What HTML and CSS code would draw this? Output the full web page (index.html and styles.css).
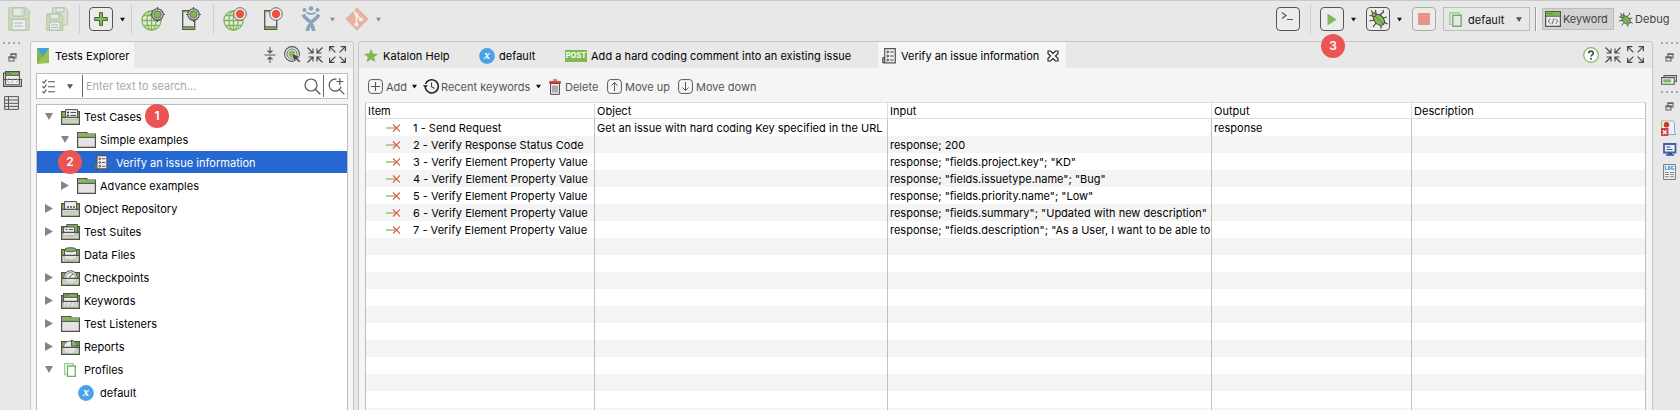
FILE: index.html
```
<!DOCTYPE html>
<html lang="en">
<head>
<meta charset="utf-8">
<title>Katalon Studio</title>
<link rel="stylesheet" href="styles.css">
</head>
<body>
<svg class="defs" width="0" height="0">
  <symbol id="caret" viewBox="0 0 6 5"><path d="M0 .3h6L3 5z" fill="currentColor"/></symbol>
  <symbol id="globe" viewBox="0 0 24 24"><g fill="none" stroke="#7fb855" stroke-width="1.3"><circle cx="10.5" cy="13.5" r="9.6"/><ellipse cx="10.5" cy="13.5" rx="4.6" ry="9.6"/><path d="M10.500 4v19M1 13.500h19M2.500 8.500h16M2.500 18.500h16"/></g></symbol>
  <symbol id="phone" viewBox="0 0 20 24"><path d="M1.700 3.700h12v18.600h-12z" fill="#e8e8e8" stroke="#555" stroke-width="1.300"/><path d="M2 20h11.500v2H2zM2 4h6v1.500H2z" fill="#7fb855"/><path d="M1.500 19.800h12" stroke="#555"/></symbol>
  <symbol id="spy" viewBox="0 0 14 14"><circle cx="7" cy="7" r="5.300" fill="#e8e8e8" stroke="#555" stroke-width="1.100"/><circle cx="7" cy="7" r="3.500" fill="#7fb855" stroke="#555" stroke-width=".7"/><path d="M7 0v2M7 12v2M0 7h2M12 7h2" stroke="#555" stroke-width="1.100"/></symbol>
  <symbol id="rec" viewBox="0 0 14 14"><circle cx="7" cy="7" r="6.300" fill="#f0f0f0" stroke="#666" stroke-width="1"/><circle cx="7" cy="7" r="4.200" fill="#ee523f"/></symbol>
  <symbol id="bug" viewBox="0 0 20 20"><g stroke="#444" stroke-width="1.200" fill="none"><path d="M8 5 7.500 1M5 7 1.500 6.500M12 6l3.500-3-.3-2M15 9l4-1M16 13l3.500 2M6 11l-4.500 1M8 14l-3 4M13 17v2.500M3 1.500 5 4"/></g><ellipse cx="11" cy="10.800" rx="6.400" ry="4.500" transform="rotate(45 11 10.800)" fill="#7fb855" stroke="#444" stroke-width="1"/><circle cx="6" cy="5.800" r="2.100" fill="#7fb855" stroke="#444"/><path d="m7 7 8 8" stroke="#5a7d42" stroke-width=".8"/></symbol>
  <symbol id="shrink" viewBox="0 0 16 16"><path d="M.5.5 6 6M6 1.500V6H1.500M15.500.5 10 6M10 1.500V6h4.500M.5 15.500 6 10M1.500 10H6v4.500M15.500 15.500 10 10M14.500 10H10v4.500" fill="none" stroke="#444" stroke-width="1.100"/></symbol>
  <symbol id="grow" viewBox="0 0 16 16"><path d="M.6.6 6 6M.6 5V.6H5M15.400.6 10 6M11 .6h4.400V5M.6 15.400 6 10M.6 11v4.400H5M15.400 15.400 10 10M15.400 11v4.400H11" fill="none" stroke="#444" stroke-width="1.100"/></symbol>
  <symbol id="restore" viewBox="0 0 9 9"><path d="M3 1h5v4H3zM1 4h5v4H1z" fill="#e8e8e8" stroke="#6b635c" stroke-width="1.100"/><path d="M2.500 1.200h6M.5 4.200h6" stroke="#6b635c" stroke-width="1.600"/></symbol>
  <symbol id="var" viewBox="0 0 16 16"><circle cx="8" cy="8" r="7.900" fill="#4aa3e8"/><text x="7.900" y="11.300" class="var-x">x</text></symbol>
  <symbol id="case" viewBox="0 0 14 16"><path d="M.7 9.500H3v5.300H.7z" fill="#7fb855" stroke="#555"/><path d="M2.700.7h10.600v14.100H2.700z" fill="#efefef" stroke="#555" stroke-width="1.200"/><path d="M8 4h3.700M8 8h3.700M8 12h3.700" stroke="#555"/><g fill="none" stroke="#444" stroke-width="1"><circle cx="5.700" cy="4" r=".9"/><circle cx="5.700" cy="8" r=".9"/><circle cx="5.700" cy="12" r=".9"/></g></symbol>
  <symbol id="folder" viewBox="0 0 19 16"><path d="M.6 15.300V.7h9.200V2h8.600v13.300z" fill="#e4e2e4" stroke="#505050" stroke-width="1.200"/><path d="M1.200 1.300h8v1.300h8.600v2.600H1.200z" fill="#7fb855"/><path d="M.6 5.400h17.800" stroke="#505050"/></symbol>
  <symbol id="bin-back" viewBox="0 0 19 16"><path d="M.6 15.300V2.600h17.800v12.700z" fill="#7fb855" stroke="#505050" stroke-width="1.200"/></symbol>
  <symbol id="bin-front" viewBox="0 0 19 16"><path d="M1 8.500h17v6.500H1z" fill="#dfe3da" fill-opacity=".75"/><path d="M.6 8.300h17.800v7H.6z" fill="none" stroke="#505050" stroke-width="1.200"/></symbol>
  <symbol id="step" viewBox="0 0 14 8"><path d="M0 4h10" stroke="#7fb855" stroke-width="1.200"/><path d="m7 .5 7 7M14 .5l-7 7" stroke="#e05a4a" stroke-width="1.100"/></symbol>
  <symbol id="pages" viewBox="0 0 12 14"><path d="M2.500 11.500H.7V.7h8.500v1.500" fill="none" stroke="#9fca9b" stroke-width="1.300"/><path d="M3.500 3h7.800v10.300H3.500z" fill="none" stroke="#6fb268" stroke-width="1.300"/></symbol>
  <symbol id="code" viewBox="0 0 19 16"><path d="M2.600.6h13.800v6H2.600z" fill="#7fb855" stroke="#505050" stroke-width="1.200"/><path d="M4.500 2.300h4" stroke="#3f6e25" stroke-dasharray="1 1"/><path d="M2.600 4.300h13.800v9.500H2.600z" fill="#efefef" stroke="#505050"/></symbol>
</svg>

<header class="toolbar">
  <svg class="save" width="22" height="24" viewBox="0 0 22 24"><path d="M.7.7h17.600l3 3v19.600H.7z" fill="#c7dcba" stroke="#b8cdad"/><path d="M5 1h11v8H5z" fill="#e8e8e8" stroke="#b5bcb0"/><path d="M12.500 2.500h2v4h-2z" fill="#c7dcba"/><path d="M4 12.500h14V23H4z" fill="#eee" stroke="#b5bcb0"/><path d="M6 16h9M6 19h9" stroke="#b5b5b5"/></svg>
  <svg class="save-all" width="23" height="24" viewBox="0 0 23 24"><path d="M6.600 6V.7h12.600l2.500 2.500V18H17" fill="#d5e2cc" stroke="#b9c7b0"/><path d="M10 1h8v4h-8z" fill="#e8e8e8" stroke="#bbb"/><path d="M.7 6.700h13.600l2.500 2.500v14.200H.7z" fill="#c7dcba" stroke="#b4c8a8"/><path d="M4 7h9v5H4z" fill="#e8e8e8" stroke="#b5bcb0"/><path d="M3.500 15h10.500v8H3.500z" fill="#eee" stroke="#b5bcb0"/><path d="M5 18h7M5 20.500h7" stroke="#b5b5b5"/></svg>
  <i class="sep s1"></i>
  <span class="box b-add"><svg width="14" height="14" viewBox="0 0 14 14"><path d="M5.500.6h3v4.900h4.900v3H8.500v4.900h-3V8.500H.6v-3h4.900z" fill="#83bd57" stroke="#41582f" stroke-width=".9"/></svg></span>
  <svg class="caret"><use href="#caret"/></svg>
  <i class="sep s2"></i>
  <svg class="g1" width="24" height="24" viewBox="0 0 24 24"><use href="#globe" width="24" height="24"/><use href="#spy" x="9" y="0" width="15" height="15"/></svg>
  <svg class="p1" width="20" height="24" viewBox="0 0 20 24"><use href="#phone" width="20" height="24"/><use href="#spy" x="5" y="0" width="15" height="15"/></svg>
  <i class="sep s3"></i>
  <svg class="g1" width="24" height="24" viewBox="0 0 24 24"><use href="#globe" width="24" height="24"/><use href="#rec" x="10" y="0" width="14" height="14"/></svg>
  <svg class="p1" width="20" height="24" viewBox="0 0 20 24"><use href="#phone" width="20" height="24"/><use href="#rec" x="6" y="0" width="14" height="14"/></svg>
  <svg class="jira" width="20" height="26" viewBox="0 0 20 26"><g fill="#8ba3bd"><circle cx="3.500" cy="4" r="2"/><circle cx="10" cy="2.500" r="2.300"/><circle cx="16.500" cy="4" r="2"/></g><path d="M2.200 8.500c2 5 5 4.500 7.800 8.500 2 3 2.500 5 2.600 8M17.800 8.500c-2 5-5 4.500-7.800 8.500-2 3-3.500 5-3.600 8" stroke="#8ba3bd" stroke-width="3.600" fill="none"/><path d="M5.500 6.500q4.500 3 9 0" fill="none" stroke="#8ba3bd" stroke-width="2"/></svg>
  <svg class="caret dim"><use href="#caret"/></svg>
  <svg class="git" width="24" height="24" viewBox="0 0 24 24"><path d="m12 .8 11.200 11.200L12 23.200.8 12z" fill="#e5b3a4" stroke="#e5b3a4" stroke-linejoin="round"/><path d="m8.500 4 3 3.500v10M11.500 8l4.500 4.500" stroke="#f5eeea" stroke-width="1.600" fill="none"/><g fill="#f5eeea"><circle cx="11.500" cy="7.800" r="2"/><circle cx="16" cy="12.500" r="2"/><circle cx="11.500" cy="17.500" r="2"/></g></svg>
  <svg class="caret dim last"><use href="#caret"/></svg>

  <div class="tools-right">
    <span class="box b-console"><svg width="14" height="14" viewBox="0 0 14 14"><path d="m1 .5 4 3-4 3M6 7.500h6" fill="none" stroke="#555" stroke-width="1.200"/></svg></span>
    <i class="sep s4"></i>
    <span class="box b-run"><svg width="10" height="13" viewBox="0 0 10 13"><path d="M.5.5 9.500 6.500l-9 6z" fill="#7fb855"/></svg><b class="badge n3">3</b></span>
    <svg class="caret"><use href="#caret"/></svg>
    <span class="box b-bug"><svg width="20" height="20"><use href="#bug"/></svg></span>
    <svg class="caret"><use href="#caret"/></svg>
    <span class="box b-stop"><i></i></span>
    <span class="combo"><svg width="13" height="15"><use href="#pages"/></svg><em>default</em><svg class="caret gray"><use href="#caret"/></svg></span>
    <i class="divider"></i>
    <span class="persp on"><svg width="16" height="16" viewBox="0 0 16 16"><path d="M.6.6h14.800v14.800H.6z" fill="#ececec" stroke="#555" stroke-width="1.200"/><path d="M1 1h14v4H1z" fill="#7fb855"/><path d="M2.500 2.600h5" stroke="#3e6728" stroke-dasharray="1 1"/><path d="M.6 5.300h14.800M5.500 8 3 10.300l2.500 2.300M10.500 8l2.500 2.300-2.500 2.300M9 7.500l-2 5.700" fill="none" stroke="#555" stroke-width=".9"/></svg>Keyword</span>
    <span class="persp"><svg width="15" height="15"><use href="#bug"/></svg>Debug</span>
  </div>
</header>

<main class="work">
  <aside class="trim left">
    <i class="grip"></i>
    <svg class="restore"><use href="#restore"/></svg>
    <svg class="t-key" width="19" height="16"><use href="#code"/><path d="M.6 8.500h17.800v6.900H.6zM2.500 2H.6v7" fill="none" stroke="#505050" stroke-width="1.200"/><path d="m6 7-2 2.500L6 12M13 7l2 2.500-2 2.500M10.500 7l-2 5" fill="none" stroke="#aaa" stroke-width=".9"/></svg>
    <svg class="t-list" width="15" height="14" viewBox="0 0 15 14"><path d="M.6.6h13.800v12.800H.6zM4.500.6v12.800M.6 4h13.800M.6 7.300h13.800M.6 10.400h13.800" fill="none" stroke="#555"/></svg>
  </aside>

  <section class="panel explorer">
    <div class="tabs">
      <span class="tab active t-exp"><svg width="12" height="16" viewBox="0 0 12 16"><path d="M0 0v16l12-1V0z" fill="#97c352"/><path d="M0 0h12L6 9z" fill="#429fd9"/><path d="m0 0 6 8-6 8z" fill="#84b648"/></svg>Tests Explorer</span>
      <span class="tab-tools">
        <svg width="12" height="16" viewBox="0 0 12 16"><path d="M.5 8h11M6 0v5.500M3.500 3.500 6 6l2.500-2.500M6 16v-5.500M3.500 12.500 6 10l2.500 2.500" fill="none" stroke="#555" stroke-width="1.100"/></svg>
        <svg width="17" height="17" viewBox="0 0 17 17"><circle cx="8" cy="8" r="7.400" fill="none" stroke="#555" stroke-width="1.100"/><circle cx="8" cy="8" r="5" fill="none" stroke="#777"/><circle cx="8" cy="8" r="3.400" fill="#7fb855"/><path d="m7.500 7.500 8.500 3.200-2.800 1.200 3.300 3.300-1.300 1.300-3.300-3.300-1.300 2.800z" fill="#444" stroke="#e8e8e8" stroke-width=".5"/></svg>
        <svg width="16" height="16"><use href="#shrink"/></svg>
        <svg width="17" height="17"><use href="#grow"/></svg>
      </span>
    </div>
    <div class="search">
      <svg class="chk" width="14" height="15" viewBox="0 0 14 15"><path d="m.5 2.500 1.500 1.500L4.500.7M.5 7.500 2 9l2.500-3.300M.5 12.500 2 14l2.500-3.300M6 2.800h7M6 7.800h7M6 12.800h7" fill="none" stroke="#555" stroke-width="1.100"/></svg>
      <svg class="caret gray"><use href="#caret"/></svg>
      <i class="bar"></i>
      <span class="ph">Enter text to search...</span>
      <svg class="mag" width="17" height="17" viewBox="0 0 17 17"><circle cx="7" cy="7" r="6" fill="none" stroke="#555" stroke-width="1.200"/><path d="m11.300 11.300 5 5" stroke="#555" stroke-width="1.300"/></svg>
      <i class="bar"></i>
      <svg class="mag2" width="17" height="17" viewBox="0 0 17 17"><path d="M8.500 1.200A6 6 0 1 0 13 8.500" fill="none" stroke="#555" stroke-width="1.200"/><path d="m11.300 11.300 5 5M11.800 0v7M8.300 3.500h7" stroke="#555" stroke-width="1.200"/></svg>
    </div>
    <ul class="tree">
      <li><i class="tw open"></i><svg class="ic"><use href="#bin-back"/><path d="M4.600.6h12v10h-12z" fill="#efefef" stroke="#505050"/><path d="M9.500 3.500H15M9.500 6.500H15" stroke="#555"/><path d="M6 3.500h2M6 6.500h2" stroke="#333" stroke-width="1.500"/><use href="#bin-front"/></svg>Test Cases<b class="badge n1">1</b></li>
      <li class="d1"><i class="tw open"></i><svg class="ic"><use href="#folder"/></svg>Simple examples</li>
      <li class="d2 sel"><b class="badge n2">2</b><svg class="ic-case"><use href="#case"/></svg>Verify an issue information</li>
      <li class="d1"><i class="tw"></i><svg class="ic"><use href="#folder"/></svg>Advance examples</li>
      <li><i class="tw"></i><svg class="ic"><use href="#bin-back"/><path d="M3.600.6h12v10h-12z" fill="#efefef" stroke="#505050"/><path d="M6 6h8" stroke="#555" stroke-width="1.500" stroke-dasharray="2 1"/><use href="#bin-front"/></svg>Object Repository</li>
      <li><i class="tw"></i><svg class="ic"><use href="#bin-back"/><path d="M5.600.6h11v10h-11z" fill="#7fb855" stroke="#505050"/><path d="M2.600 3h11v9h-11z" fill="#efefef" stroke="#505050"/><path d="M8 5.500h4M4.500 5.500h2" stroke="#555"/><use href="#bin-front"/><path d="M8 11.500h4M4.500 11.500h2" stroke="#aaa"/></svg>Test Suites</li>
      <li><i class="tw none"></i><svg class="ic"><use href="#bin-back"/><path d="M3.600 2.500v11h12v-11" fill="#efefef" stroke="#505050"/><ellipse cx="9.500" cy="2.700" rx="6" ry="2" fill="#7fb855" stroke="#505050"/><use href="#bin-front"/><path d="M4 12q5.500 2 11 0" fill="none" stroke="#bbb"/></svg>Data Files</li>
      <li><i class="tw"></i><svg class="ic"><use href="#bin-back"/><circle cx="9.500" cy="7.500" r="6.800" fill="#dce8d2" stroke="#505050"/><circle cx="9.500" cy="7.500" r="4.800" fill="#f2f2f2" stroke="#888"/><path d="m8 7.500 4-3.500" stroke="#555"/><use href="#bin-front"/></svg>Checkpoints</li>
      <li><i class="tw"></i><svg class="ic"><use href="#bin-back"/><use href="#code"/><use href="#bin-front"/><path d="m6.500 9-2 2 2 2M12.500 9l2 2-2 2M10.500 9l-2 4.500" fill="none" stroke="#aaa" stroke-width=".9"/></svg>Keywords</li>
      <li><i class="tw"></i><svg class="ic"><use href="#folder"/></svg>Test Listeners</li>
      <li><i class="tw"></i><svg class="ic"><use href="#bin-back"/><circle cx="9" cy="8.500" r="6.500" fill="#ececec" stroke="#777"/><path d="M10.500 7V1l5 2.500 1.500 3.500z" fill="#7fb855" stroke="#505050" stroke-width=".9"/><use href="#bin-front"/></svg>Reports</li>
      <li><i class="tw open"></i><svg class="ic-pages"><use href="#pages"/></svg>Profiles</li>
      <li class="d1"><i class="tw none"></i><svg class="ic-var"><use href="#var"/></svg>default</li>
    </ul>
  </section>

  <section class="panel editor">
    <div class="tabs">
      <span class="tab e1"><svg width="14" height="13" viewBox="0 0 14 13"><path d="m7 0 2 4.500 5 .4-3.800 3.200L11.400 13 7 10.400 2.600 13l1.200-4.900L0 4.900l5-.4z" fill="#7fb855"/></svg>Katalon Help</span>
      <span class="tab e2"><svg width="16" height="16"><use href="#var"/></svg>default</span>
      <span class="tab e3"><b class="post">POST</b>Add a hard coding comment into an existing issue</span>
      <span class="tab active e4"><svg width="14" height="16"><use href="#case"/></svg>Verify an issue information<svg class="close" width="12" height="12" viewBox="0 0 12 12"><path d="M1 1h2.500L6 3.500 8.500 1H11v2.500L8.500 6 11 8.500V11H8.500L6 8.500 3.500 11H1V8.500L3.500 6 1 3.500z" fill="none" stroke="#222" stroke-width="1.100"/></svg></span>
      <span class="tab-tools">
        <svg width="16" height="16" viewBox="0 0 16 16"><circle cx="8" cy="8" r="7.300" fill="#fff" stroke="#7fb855" stroke-width="1.200"/><path d="M5.700 6.300C5.700 3.400 10.300 3.400 10.300 6.200 10.300 7.900 8 7.800 8 9.600" fill="none" stroke="#444" stroke-width="1.600"/><circle cx="8" cy="11.800" r="1" fill="#444"/></svg>
        <svg width="16" height="16"><use href="#shrink"/></svg>
        <svg width="17" height="17"><use href="#grow"/></svg>
      </span>
    </div>
    <div class="actions">
      <svg width="15" height="15" viewBox="0 0 15 15"><rect x=".6" y=".6" width="13.800" height="13.800" rx="3" fill="none" stroke="#555"/><path d="M7.500 3v9M3 7.500h9" stroke="#555" stroke-width="1.100"/></svg><span class="a1">Add</span><svg class="caret"><use href="#caret"/></svg>
      <svg class="hist" width="16" height="15" viewBox="0 0 16 15"><path d="M2.300 9A6.600 6.600 0 1 0 2.500 5" fill="none" stroke="#222" stroke-width="1.500"/><path d="M0 6.300h4.800L2.300 9.500z" fill="#222"/><path d="M8.500 3.500v4.300l3 1.700" fill="none" stroke="#444" stroke-width="1.100"/></svg><span class="a2">Recent keywords</span><svg class="caret"><use href="#caret"/></svg>
      <svg class="trash" width="12" height="16" viewBox="0 0 12 16"><path d="M1.600 4.500h8.800v10.800H1.600z" fill="#f5f5f5" stroke="#444"/><path d="M4 6.500v7M6 6.500v7M8 6.500v7" stroke="#555" stroke-width=".9"/><path d="M.5 2.300h11V4.500H.5z" fill="#e8352a" stroke="#7e2a22" stroke-width=".4"/><path d="M4 1h4" stroke="#444"/></svg><span class="a3">Delete</span>
      <svg class="up" width="15" height="15" viewBox="0 0 15 15"><rect x=".6" y=".6" width="13.800" height="13.800" rx="3" fill="none" stroke="#555"/><path d="M7.500 3.500v8.500M4.500 6.500l3-3 3 3" fill="none" stroke="#555"/></svg><span class="a4">Move up</span>
      <svg class="down" width="15" height="15" viewBox="0 0 15 15"><rect x=".6" y=".6" width="13.800" height="13.800" rx="3" fill="none" stroke="#555"/><path d="M7.500 3v8.500M4.500 8.500l3 3 3-3" fill="none" stroke="#555"/></svg><span class="a5">Move down</span>
    </div>
    <div class="table">
      <div class="row head"><span>Item</span><span>Object</span><span>Input</span><span>Output</span><span>Description</span></div>
      <div class="row"><span><svg class="step"><use href="#step"/></svg>1 - Send Request</span><span>Get an issue with hard coding Key specified in the URL</span><span></span><span>response</span><span></span></div>
      <div class="row"><span><svg class="step"><use href="#step"/></svg>2 - Verify Response Status Code</span><span></span><span>response; 200</span><span></span><span></span></div>
      <div class="row"><span><svg class="step"><use href="#step"/></svg>3 - Verify Element Property Value</span><span></span><span>response; "fields.project.key"; "KD"</span><span></span><span></span></div>
      <div class="row"><span><svg class="step"><use href="#step"/></svg>4 - Verify Element Property Value</span><span></span><span>response; "fields.issuetype.name"; "Bug"</span><span></span><span></span></div>
      <div class="row"><span><svg class="step"><use href="#step"/></svg>5 - Verify Element Property Value</span><span></span><span>response; "fields.priority.name"; "Low"</span><span></span><span></span></div>
      <div class="row"><span><svg class="step"><use href="#step"/></svg>6 - Verify Element Property Value</span><span></span><span>response; "fields.summary"; "Updated with new description"</span><span></span><span></span></div>
      <div class="row"><span><svg class="step"><use href="#step"/></svg>7 - Verify Element Property Value</span><span></span><span>response; "fields.description"; "As a User, I want to be able to</span><span></span><span></span></div>
      <div class="row fill"><span></span><span></span><span></span><span></span><span></span></div>
    </div>
  </section>

  <aside class="trim right">
    <i class="grip"></i>
    <svg class="restore"><use href="#restore"/></svg>
    <svg class="r-log" width="16" height="10" viewBox="0 0 16 10"><path d="M3 2.500V.6h12.400v5.800H13.500" fill="none" stroke="#555" stroke-width="1.100"/><path d="M.6 2.600h12.600v6.600H.6z" fill="#f4f4f4" stroke="#555" stroke-width="1.100"/><path d="M2.200 4.300h8v3.200h-8z" fill="#7fb855"/></svg>
    <i class="grip g2"></i>
    <svg class="restore"><use href="#restore"/></svg>
    <svg class="r-prob" width="16" height="17" viewBox="0 0 16 17"><path d="M.6 8V1h8" fill="none" stroke="#b9a873"/><path d="M1 1.500h8V15H1z" fill="#f1eedd"/><path d="M8.500 1H12q2 .5 1.500 4v7l1.500 2.500H8" fill="#e9f1fa" stroke="#8fa9c7"/><circle cx="5.500" cy="4.700" r="2.700" fill="#d0312d"/><path d="M0 8h7.500v8H0z" fill="#c8474a"/><path d="m2 10.500 3.500 3.500M5.500 10.500 2 14" stroke="#fff" stroke-width="1.300"/></svg>
    <svg class="r-con" width="14" height="13" viewBox="0 0 14 13"><path d="M1 1h11.500v8.500H1z" fill="#eef3fb" stroke="#3d62a5" stroke-width="1.800"/><path d="M3.500 4h4M3.500 6.500h6" stroke="#34558f"/><path d="M3 12h8M5 10.700h4" stroke="#34558f" stroke-width="1.500"/></svg>
    <svg class="r-doc" width="13" height="16" viewBox="0 0 13 16"><path d="M.6.6h11.800v14.800H.6z" fill="#f3f3f3" stroke="#777"/><path d="M2.500 2v3.500h2M5.500 2.500h1.500v3H5.500zM10.500 2.500H8.700v3h1.800V4" fill="none" stroke="#3f97d8"/><path d="M2 8.500h4M7 8.500h4M2 10.500h4M7 10.500h4M2 12.700h4M7 12.700h4" stroke="#888"/></svg>
  </aside>
</main>
</body>
</html>
```
FILE: styles.css
```
* { box-sizing: border-box; }
body {
  margin: 0;
  width: 1680px;
  height: 410px;
  overflow: hidden;
  background: #e8e8e8;
  color: #111;
  font: 11px/16px Inter, "Liberation Sans", sans-serif;
  letter-spacing: .03px;
  white-space: nowrap;
}
svg { display: block; flex: none; overflow: visible; }
.defs { position: absolute; }
.var-x { font: italic 700 12px "Liberation Serif", serif; fill: #fff; text-anchor: middle; }
i, em { font-style: normal; }

/* toolbar */
.toolbar {
  display: flex;
  align-items: center;
  height: 41px;
  border-top: 1px solid #c9c9c9;
  padding: 0 11px 4px 8px;
}
.caret { width: 5px; height: 5px; margin-left: 7px; color: #111; }
.caret.dim { color: #888; margin-left: 9px; }
.caret.last { margin-left: 7px; }
.caret.gray { color: #555; }
.sep { width: 1px; height: 30px; background: #cfcfcf; flex: none; }
.save-all { margin-left: 16px; }
.s1 { margin-left: 10px; }
.box {
  position: relative;
  display: flex;
  align-items: center;
  justify-content: center;
  flex: none;
  width: 24px;
  height: 24px;
  border: 1px solid #555;
  border-radius: 4px;
  background: #ececec;
}
.b-add { margin-left: 9px; }
.s2 { margin-left: 6px; }
.g1 { margin-left: 9px; }
.p1 { margin-left: 16px; }
.s3 { margin-left: 12px; }
.jira { margin-left: 18px; }
.git { margin-left: 10px; }
.tools-right { display: flex; align-items: center; width: 393px; margin-left: auto; }
.b-console { align-items: flex-start; justify-content: flex-start; padding: 4px; }
.s4 { margin: 0 9px 0 10px; }
.b-bug { margin-left: 10px; }
.b-stop { margin-left: 10px; border-color: #aaa; }
.b-stop i { width: 12px; height: 12px; background: #ea938c; }
.combo {
  display: flex;
  align-items: center;
  flex: none;
  width: 87px;
  height: 24px;
  margin-left: 7px;
  padding: 1px 0 0 5px;
  border: 1px solid #bdbdbd;
  color: #111;
}
.combo em { width: 40px; margin-left: 6px; }
.combo .caret { margin-left: 8px; width: 6px; }
.divider { flex: none; width: 2px; height: 24px; margin: 0 5px; background: linear-gradient(90deg, #999 50%, #fafafa 50%); }
.persp { display: flex; flex: none; align-items: center; gap: 2px; height: 22px; color: #444; padding-left: 4px; }
.persp.on { width: 72px; padding-left: 2px; border: 1px solid #bcbcbc; background: #d3d3d3; letter-spacing: -.1px; }

.badge {
  position: absolute;
  width: 24px;
  height: 24px;
  border-radius: 50%;
  background: #ea5455;
  color: #fff;
  font: 600 12px/24px Inter, sans-serif;
  text-align: center;
  z-index: 2;
}
.n3 { left: 0; top: 26px; }
.n1 { left: 108px; top: -1px; }
.n2 { left: 21px; top: -1px; }

/* work area */
.work { display: flex; height: 369px; }
.trim { display: flex; flex-direction: column; align-items: flex-start; }
.left { width: 30px; padding: 1px 0 0 3px; }
.right { width: 27px; padding: 1px 0 0 8px; }
.grip { width: 17px; height: 2px; background: repeating-linear-gradient(90deg, #aaa69f 0 2px, transparent 2px 5px); }
.restore { width: 9px; height: 9px; margin: 9px 0 0 5px; }
.t-key { margin-top: 9px; }
.t-list { margin: 9px 0 0 1px; }

.panel { background: #f5f5f5; border: 1px solid #c6c6c6; border-bottom: 0; border-radius: 4px 4px 0 0; }
.explorer { width: 324px; }
.editor { width: 1295px; margin-left: 4px; }
.tabs { display: flex; height: 26px; background: #e8e8e8; border-radius: 3px 3px 0 0; }
.tab { display: flex; align-items: center; padding-top: 1px; color: #000; }
.tab.active { background: #f5f5f5; }
.tab-tools { display: flex; align-items: center; gap: 6px; margin-left: auto; padding-bottom: 1px; }
.t-exp { width: 103px; padding-left: 6px; gap: 6px; border-top-left-radius: 4px; }
.explorer .tab-tools { padding-right: 7px; }
.explorer .tab-tools svg:first-child { margin-right: 2px; }

.search {
  display: flex;
  align-items: center;
  height: 26px;
  margin: 5px 5px 0 5px;
  border: 1px solid #bdbdbd;
  background: #fff;
}
.chk { margin-left: 5px; }
.search .caret { margin-left: 11px; width: 6px; }
.bar { flex: none; width: 1px; height: 22px; background: #666; margin-left: 9px; }
.ph { flex: none; width: 218px; margin-left: 3px; color: #aaa; letter-spacing: -.02px; }
.mag + .bar { margin-left: 2px; }
.mag2 { margin-left: 4px; }

.tree {
  height: 320px;
  margin: 5px 5px 0 5px;
  padding: 0;
  border: 1px solid #bdbdbd;
  background: #fff;
  list-style: none;
}
.tree li { position: relative; display: flex; align-items: center; height: 23px; padding-left: 8px; color: #000; }
.tree .d1 { padding-left: 24px; }
.tree .sel { padding-left: 57px; color: #fff; }
.sel { background: linear-gradient(#2468d0, #2468d0) 0 0 / 100% 22px no-repeat; }
.tw { width: 8px; height: 9px; background: #858585; clip-path: polygon(0 0, 100% 50%, 0 100%); margin-right: 8px; }
.tw.open { clip-path: polygon(0 10%, 100% 10%, 50% 90%); }
.tw.none { visibility: hidden; }
.ic { width: 19px; height: 16px; margin-right: 4px; }
.ic use { width: 19px; height: 16px; }
.ic-case { width: 14px; height: 15px; margin-right: 8px; }
.ic-pages { width: 12px; height: 14px; margin: 0 8px 0 3px; }
.ic-var { width: 16px; height: 16px; margin: 0 6px 0 1px; }

/* editor */
.e1 { padding-left: 5px; gap: 5px; width: 115px; }
.e2 { gap: 4px; width: 91px; padding-left: 5px; }
.e3 { width: 313px; gap: 4px; }
.post { width: 22px; height: 12px; background: #7fb855; color: #fff; font: 700 7.500px/12px Inter, sans-serif; letter-spacing: 0; text-align: center; }
.e4 { width: 188px; padding-left: 4px; gap: 5px; letter-spacing: -.02px; }
.close { margin-left: 3px; }
.editor .tab-tools { padding-right: 8px; }
.actions { display: flex; align-items: center; height: 34px; padding: 3px 0 0 9px; color: #555; letter-spacing: 0; }
.actions span { margin-left: 3px; flex: none; }
.actions .caret { margin-left: 5px; }
.a1 { width: 21px; }
.hist { margin-left: 6px; }
.actions .a2 { width: 90px; margin-left: 2px; }
.trash { margin-left: 8px; }
.actions .a3 { width: 35px; margin-left: 4px; }
.up { margin-left: 7px; }
.a4 { width: 46px; }
.down { margin-left: 7px; }

.table { width: 1281px; height: 320px; margin-left: 6px; border: solid #bdbdbd; border-width: 0 1px; border-top: 1px solid #dedede; background: #fff; }
.row { display: grid; grid-template-columns: 229px 293px 324px 200px 1fr; height: 17px; }
.row > span { display: flex; align-items: center; padding-left: 2px; border-right: 1px solid #c0c0c0; overflow: hidden; color: #000; }
.row > span:last-child { border-right: 0; }
.row:not(.head) > span:nth-child(3) { letter-spacing: 0; }
.row:nth-child(odd) { background: #f4f4f4; }
.row.head { height: 16px; background: #fff; border-bottom: 1px solid #dedede; }
.row.head > span { border-color: #ddd; }
.step { width: 14px; height: 8px; margin: 0 13px 0 18px; }
.row.fill { height: 185px; background: repeating-linear-gradient(#f4f4f4 0 17px, #fff 17px 34px); }

.right .restore { margin: 9px 0 0 4px; }
.r-log { margin-top: 13px; }
.g2 { margin-top: 6px; }
.r-prob { margin-top: 9px; }
.r-con { margin: 6px 0 0 2px; }
.r-doc { margin: 8px 0 0 2px; }
```
